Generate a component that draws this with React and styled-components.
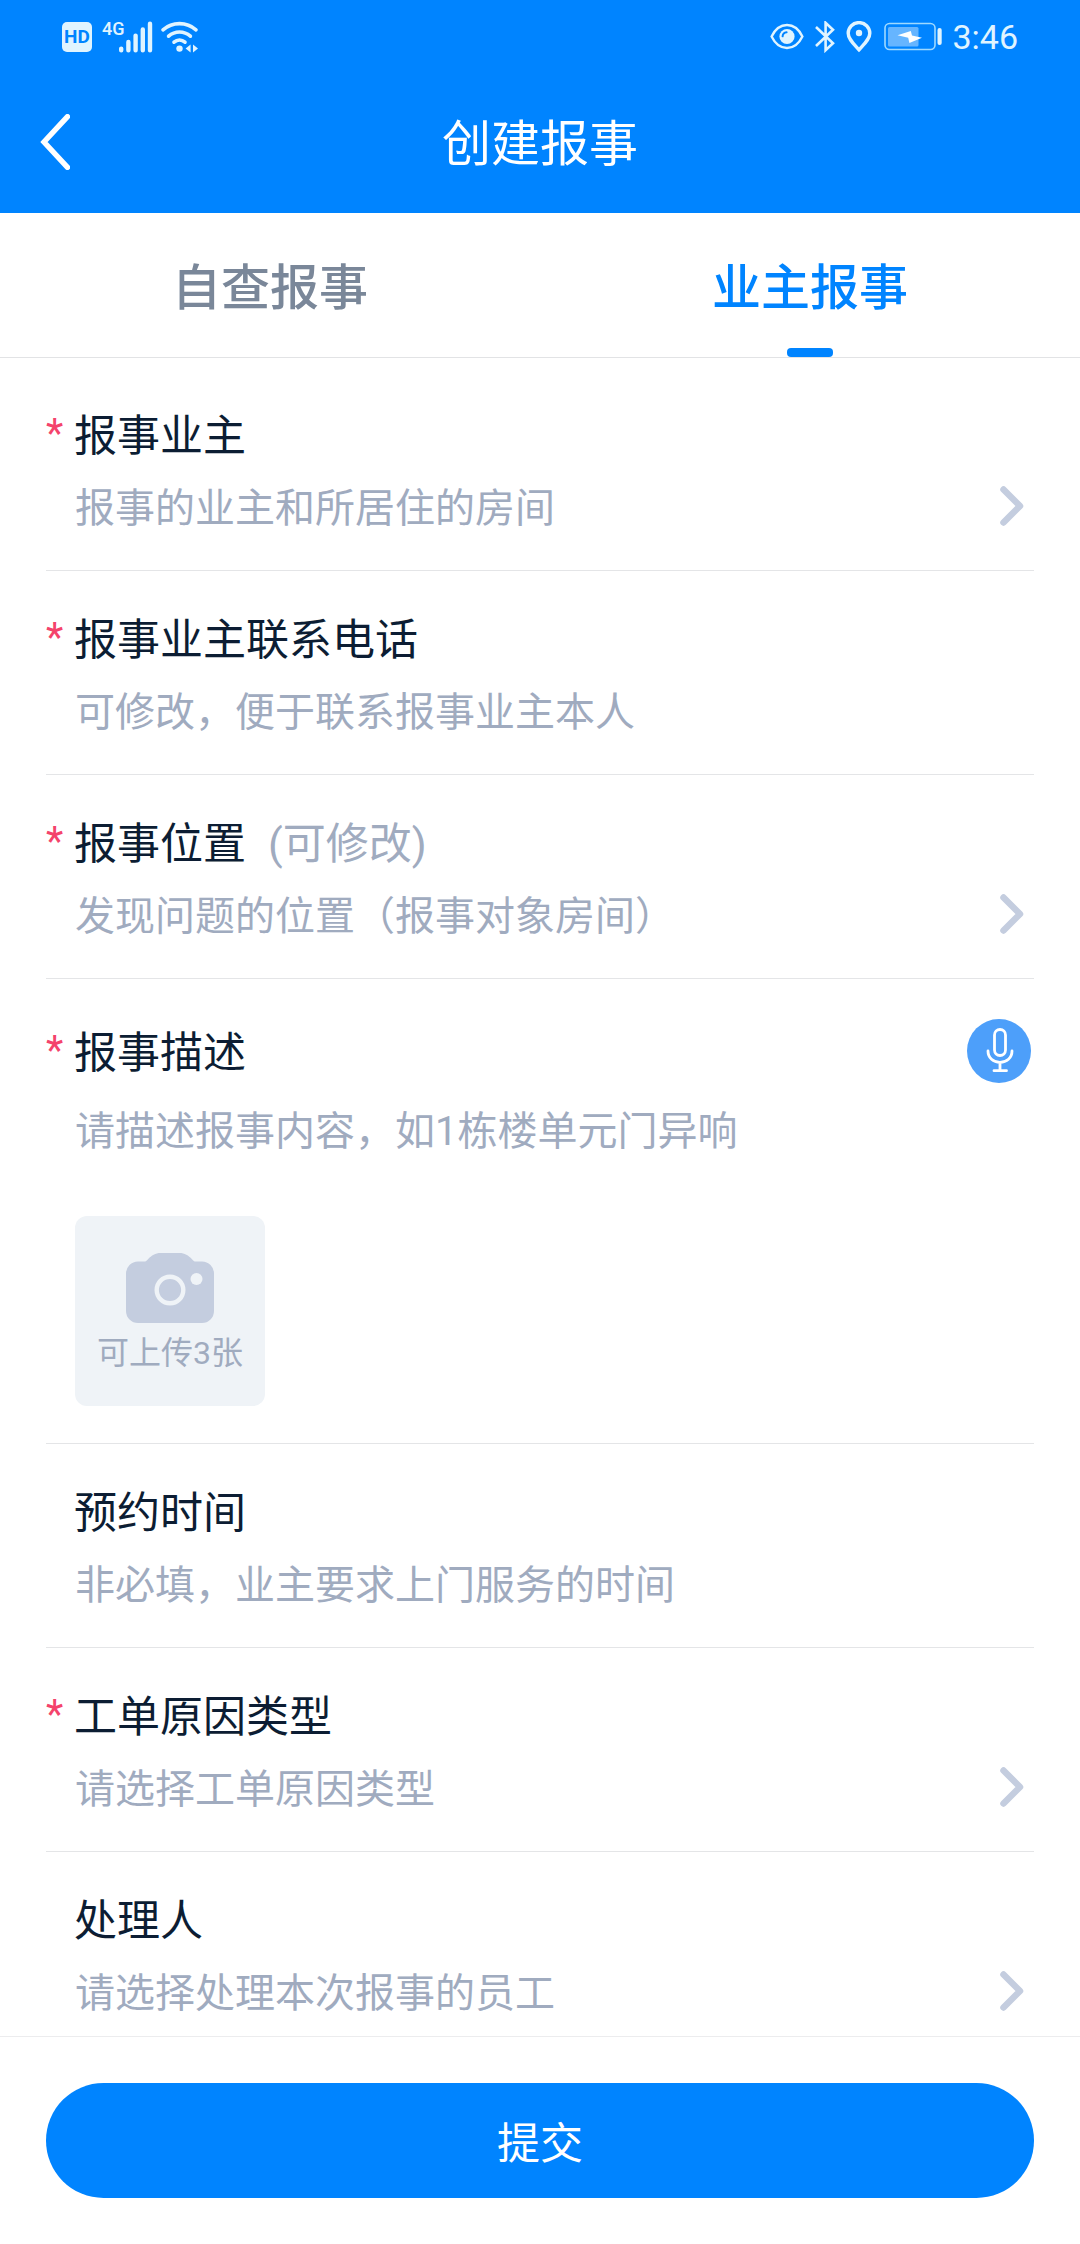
import { useState } from 'react';
import styled, { createGlobalStyle } from 'styled-components';

const GlobalStyle = createGlobalStyle`
* {
    box-sizing: border-box;
}

body {
    margin: 0;
    background: #ffffff;
    font-family: Roboto, "Noto Sans CJK SC", sans-serif;
    color: #0c1d33;
}

button, input, textarea {
    margin: 0;
    padding: 0;
    border: none;
    background: none;
    font: inherit;
    color: inherit;
    text-align: left;
    outline: none;
}

button {
    cursor: pointer;
}

svg {
    display: block;
    flex-shrink: 0;
}
`

const Page = styled.div`
height: 100vh;
display: flex;
flex-direction: column;
`

const Header = styled.header`
background: #0084ff;
color: #ffffff;
`

const StatusBar = styled.div`
height: 74px;
padding: 0 62px;
display: flex;
align-items: center;
justify-content: space-between;
color: #e0f4ff;
`

const StatusGroup = styled.div`
height: 32px;
display: flex;
align-items: center;
gap: ${props => props.$gap}px;
`

const HdBadge = styled.span`
width: 30px;
height: 30px;
display: flex;
align-items: center;
justify-content: center;
border-radius: 5px;
background: #e0f4ff;
color: #0084ff;
font-size: 19px;
font-weight: 700;
line-height: 30px;
`

const Network = styled.span`
display: flex;
align-items: flex-start;
font-size: 18px;
font-weight: 500;
line-height: 16px;

svg {
    margin-left: -6px;
}
`

const Clock = styled.span`
font-size: 34px;
line-height: 32px;
`

const TitleBar = styled.div`
height: 139px;
padding: 0 40px;
display: grid;
grid-template-columns: 1fr auto 1fr;
align-items: center;
`

const BackButton = styled.button`
justify-self: start;
padding-bottom: 4px;
`

const Title = styled.h1`
margin: 0;
padding-top: 3px;
font-size: 49px;
font-weight: 400;
line-height: 72px;
`

const Tabs = styled.div`
display: flex;
border-bottom: 1px solid #e2e3e5;
`

const Tab = styled.button`
position: relative;
flex: 1;
height: 144px;
padding-top: 8px;
font-size: 49px;
font-weight: 500;
line-height: 72px;
text-align: center;
color: ${props => props.$active ? '#0084ff' : '#7a8799'};

&::after {
    content: "";
    display: ${props => props.$active ? 'block' : 'none'};
    position: absolute;
    bottom: 0;
    left: 50%;
    width: 46px;
    height: 9px;
    border-radius: 4px;
    background: #0084ff;
    transform: translateX(-50%);
}
`

const Form = styled.form`
flex: 1;
min-height: 0;
display: flex;
flex-direction: column;
`

const Fields = styled.div`
flex: 1;
min-height: 0;
padding: 9px 46px 0;
overflow-y: auto;
scrollbar-width: none;
`

const Row = styled.div`
padding: 39px 0 31px;
display: grid;
grid-template-columns: 28px 1fr;
row-gap: 13px;
border-bottom: 1px solid #e4e5e7;
`

const Star = styled.span`
align-self: end;
padding-bottom: 4px;
font-size: 40px;
line-height: 56px;
color: #f4436b;
`

const LabelLine = styled.div`
grid-column: 2;
min-height: 60px;
display: flex;
align-items: flex-end;
gap: 22px;
`

const Label = styled.label`
font-size: 43px;
line-height: 60px;
`

const Extra = styled.span`
font-size: 43px;
line-height: 60px;
color: #a0abbf;
`

const Control = styled.div`
grid-column: 2;
padding: 0 9px 0 1px;
display: flex;
align-items: center;
`

const TextInput = styled.input`
flex: 1;
min-width: 0;
height: 60px;
font-size: 40px;
line-height: 60px;

&::placeholder {
    color: #a0abbf;
    opacity: 1;
}
`

const PickButton = styled.button`
flex: 1;
display: flex;
align-items: center;
justify-content: space-between;
font-size: 40px;
line-height: 60px;
color: #a0abbf;
`

const TextArea = styled.textarea`
flex: 1;
height: 60px;
display: block;
resize: none;
overflow: hidden;
font-size: 40px;
line-height: 60px;

&::placeholder {
    color: #a0abbf;
    opacity: 1;
}
`

const DescriptionRow = styled(Row)`
padding: 40px 0 37px;
row-gap: 19px;
`

const MicButton = styled.button`
width: 64px;
height: 64px;
margin-left: auto;
margin-right: 3px;
border-radius: 50%;
background: #4d9ffa;
`

const UploadButton = styled.button`
grid-column: 2;
width: 190px;
height: 190px;
margin-top: 35px;
margin-left: 1px;
padding-top: 37px;
display: flex;
flex-direction: column;
align-items: center;
gap: 10px;
border-radius: 12px;
background: #eff3f7;
font-size: 32px;
line-height: 40px;
color: #a0abbf;
`

const Footer = styled.div`
padding: 46px;
border-top: 1px solid #ececee;
background: #ffffff;
`

const SubmitButton = styled.button`
width: 100%;
height: 115px;
padding-top: 6px;
border-radius: 58px;
background: #0084ff;
color: #ffffff;
font-size: 43px;
line-height: 60px;
text-align: center;
`

const SignalIcon = () => (
    <svg width="34" height="32" viewBox="0 0 34 32" stroke="currentColor" strokeWidth="4.4" strokeLinecap="round">
        <path d="M2.2 27.6v1.6M9.4 21v8.2M16.6 14.6v14.6M23.8 8.4v20.8M31 2.8v26.4" />
    </svg>
)

const WifiIcon = () => (
    <svg width="38" height="32" viewBox="2 0 38 32" fill="none" stroke="currentColor" strokeWidth="3.6" strokeLinecap="round" overflow="visible">
        <path d="M2 8.800C11.400.6 25.600.6 35 8.800M7.600 15.200c6.400-5.600 15.400-5.600 21.800 0M13 21.200c3.400-3 7.600-3 11 0" />
        <circle cx="18.500" cy="27.600" r="3.200" fill="currentColor" stroke="none" />
        <path d="M29.600 23.400v8.200l-5-4.100zM32 23.400v8.200l5-4.100z" fill="currentColor" stroke="none" />
    </svg>
)

const EyeIcon = () => (
    <svg width="34" height="32" viewBox="0 0 34 32" fill="none" stroke="currentColor" strokeWidth="2.4">
        <path d="M1.600 15.500C5 8.500 10.500 4 17 4S29 8.500 32.400 15.500C29 22.500 23.500 27 17 27S5 22.500 1.600 15.500z" />
        <circle cx="17" cy="15.500" r="7.600" fill="currentColor" stroke="none" />
        <path d="M12.600 15.300c.2-2.400 1.600-3.800 4-4" stroke="#0084ff" strokeWidth="2" strokeLinecap="round" />
    </svg>
)

const BluetoothIcon = () => (
    <svg width="22" height="32" viewBox="0 0 22 32" fill="none" stroke="currentColor" strokeWidth="2.6">
        <path d="M2 6l17 16.200-7.400 7V1.800l7.400 7L2 25" />
    </svg>
)

const PinIcon = () => (
    <svg width="26" height="32" viewBox="0 0 26 32" fill="none" stroke="currentColor" strokeWidth="3.400">
        <path d="M13 28.800C7.500 22.600 2.200 18 2.200 12.200a10.800 10.600 0 0 1 21.600 0C23.800 18 18.500 22.600 13 28.800z" />
        <circle cx="13" cy="12" r="3.200" fill="currentColor" stroke="none" />
    </svg>
)

const BatteryIcon = () => (
    <svg width="60" height="32" viewBox="-2 0 60 32" fill="none">
        <rect x="1" y="2.500" width="50" height="26" rx="4.500" stroke="#9fd9ff" strokeWidth="1.600" />
        <rect x="4" y="6" width="30.500" height="19.500" rx="1.500" fill="#66b5ff" />
        <path d="M13.500 14.200L26.800 10l1.200 4.600 10 2.200L25.400 22l-1.200-5.200z" fill="#ffffff" />
        <rect x="53.500" y="7" width="4.200" height="17" rx="2.100" fill="currentColor" />
    </svg>
)

const BackIcon = () => (
    <svg width="30" height="56" viewBox="0 0 30 56" fill="none" stroke="#ffffff" strokeWidth="5.400" strokeLinecap="round">
        <path d="M27.500 2.700L4 28 27.500 53.300" />
    </svg>
)

const ChevronIcon = () => (
    <svg width="25" height="46" viewBox="0 0 25 46" fill="none" stroke="#c4cddf" strokeWidth="6.500" strokeLinecap="round" strokeLinejoin="round">
        <path d="M3.500 3.500L20 20 3.500 36.500" />
    </svg>
)

const MicIcon = () => (
    <svg width="64" height="64" viewBox="0 0 64 64" fill="none" stroke="#ffffff" strokeWidth="2.800" strokeLinecap="round">
        <rect x="27.500" y="10.500" width="11" height="26" rx="5.500" />
        <path d="M21 32c0 7 5.400 11.400 12 11.400S45 39 45 32M33 43.400v8M27 51.700h12.500" />
    </svg>
)

const CameraIcon = () => (
    <svg width="90" height="70" viewBox="0 0 90 70">
        <path d="M13 8.500h6c2 0 2.500-.6 4-2.300C26.500 2.500 30.500 0 35.500 0h19c5 0 9 2.500 12.500 6.200 1.500 1.700 2 2.300 4 2.300h6a12 12 0 0 1 12 12V58a12 12 0 0 1-12 12H13A12 12 0 0 1 1 58V20.500a12 12 0 0 1 12-12z" fill="#c4cddf" />
        <circle cx="45" cy="37" r="13.300" fill="none" stroke="#eff3f7" strokeWidth="4.400" />
        <circle cx="71.500" cy="26" r="6" fill="#eff3f7" />
    </svg>
)

function PickRow({ id, label, hint, extra, required, arrow }) {
    return (
        <Row>
            {required && <Star>*</Star>}
            <LabelLine>
                <Label htmlFor={id}>{label}</Label>
                {extra && <Extra>{extra}</Extra>}
            </LabelLine>
            <Control>
                <PickButton type="button" id={id}>
                    {hint}
                    {arrow && <ChevronIcon />}
                </PickButton>
            </Control>
        </Row>
    )
}

function App() {
    const [tab, setTab] = useState('owner');

    return (
        <Page>
            <GlobalStyle />
            <Header>
                <StatusBar>
                    <StatusGroup $gap={10}>
                        <HdBadge>HD</HdBadge>
                        <Network>4G<SignalIcon /></Network>
                        <WifiIcon />
                    </StatusGroup>
                    <StatusGroup $gap={10}>
                        <EyeIcon />
                        <BluetoothIcon />
                        <PinIcon />
                        <BatteryIcon />
                        <Clock>3:46</Clock>
                    </StatusGroup>
                </StatusBar>
                <TitleBar>
                    <BackButton type="button" aria-label="返回"><BackIcon /></BackButton>
                    <Title>创建报事</Title>
                </TitleBar>
            </Header>
            <Tabs role="tablist">
                <Tab role="tab" aria-selected={tab === 'self'} $active={tab === 'self'} onClick={() => setTab('self')}>自查报事</Tab>
                <Tab role="tab" aria-selected={tab === 'owner'} $active={tab === 'owner'} onClick={() => setTab('owner')}>业主报事</Tab>
            </Tabs>
            <Form onSubmit={(e) => e.preventDefault()}>
                <Fields>
                    <PickRow id="owner" label="报事业主" hint="报事的业主和所居住的房间" required arrow />
                    <Row>
                        <Star>*</Star>
                        <LabelLine><Label htmlFor="phone">报事业主联系电话</Label></LabelLine>
                        <Control>
                            <TextInput id="phone" type="tel" placeholder="可修改，便于联系报事业主本人" />
                        </Control>
                    </Row>
                    <PickRow id="place" label="报事位置" extra="(可修改)" hint="发现问题的位置（报事对象房间）" required arrow />
                    <DescriptionRow>
                        <Star>*</Star>
                        <LabelLine>
                            <Label htmlFor="description">报事描述</Label>
                            <MicButton type="button" aria-label="语音输入"><MicIcon /></MicButton>
                        </LabelLine>
                        <Control>
                            <TextArea id="description" rows={1} placeholder="请描述报事内容，如1栋楼单元门异响" />
                        </Control>
                        <UploadButton type="button">
                            <CameraIcon />
                            可上传3张
                        </UploadButton>
                    </DescriptionRow>
                    <PickRow id="time" label="预约时间" hint="非必填，业主要求上门服务的时间" />
                    <PickRow id="reason" label="工单原因类型" hint="请选择工单原因类型" required arrow />
                    <PickRow id="handler" label="处理人" hint="请选择处理本次报事的员工" arrow />
                </Fields>
                <Footer>
                    <SubmitButton type="submit">提交</SubmitButton>
                </Footer>
            </Form>
        </Page>
    );
};

export default App;
